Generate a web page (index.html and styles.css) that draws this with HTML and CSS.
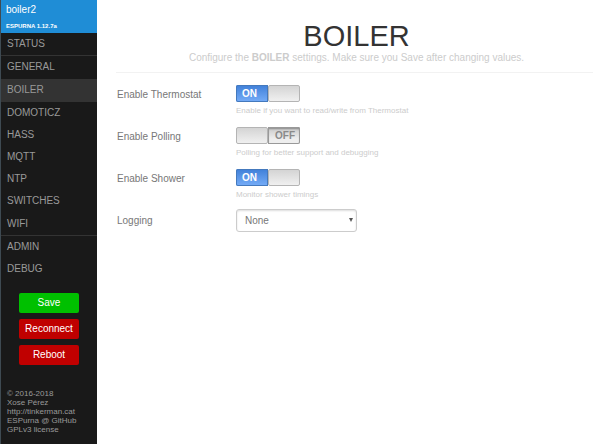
FILE: index.html
```html
<!DOCTYPE html>
<html lang="en">
<head>
<meta charset="utf-8">
<title>boiler2</title>
<link rel="stylesheet" href="styles.css">
</head>
<body>
<div class="layout">
  <aside class="sidebar">
    <header class="brand">
      <span class="hostname">boiler2</span>
      <span class="version">ESPURNA 1.12.7a</span>
    </header>
    <nav class="menu">
      <a class="divided" href="#status">STATUS</a>
      <a class="divided" href="#general">GENERAL</a>
      <a class="divided active" href="#boiler">BOILER</a>
      <a href="#domoticz">DOMOTICZ</a>
      <a href="#hass">HASS</a>
      <a href="#mqtt">MQTT</a>
      <a href="#ntp">NTP</a>
      <a class="divided" href="#switches">SWITCHES</a>
      <a class="divided group-end" href="#wifi">WIFI</a>
      <a href="#admin">ADMIN</a>
      <a href="#debug">DEBUG</a>
    </nav>
    <div class="actions">
      <button class="save" type="button">Save</button>
      <button type="button">Reconnect</button>
      <button type="button">Reboot</button>
    </div>
    <footer class="credits">
      <div>© 2016-2018</div>
      <div>Xose Pérez</div>
      <a href="#site">http://tinkerman.cat</a>
      <a href="#source">ESPurna @ GitHub</a>
      <a href="#license">GPLv3 license</a>
    </footer>
  </aside>
  <main class="content">
    <header class="page-head">
      <h1>BOILER</h1>
      <p>Configure the <b>BOILER</b> settings. Make sure you Save after changing values.</p>
    </header>
    <form class="settings">
      <div class="row">
        <label for="thermostat">Enable Thermostat</label>
        <div class="field">
          <span class="switch"><input id="thermostat" type="checkbox" checked><span class="state on">ON</span><span class="knob"></span></span>
          <span class="hint">Enable if you want to read/write from Thermostat</span>
        </div>
      </div>
      <div class="row">
        <label for="polling">Enable Polling</label>
        <div class="field">
          <span class="switch"><input id="polling" type="checkbox"><span class="knob"></span><span class="state off">OFF</span></span>
          <span class="hint">Polling for better support and debugging</span>
        </div>
      </div>
      <div class="row">
        <label for="shower">Enable Shower</label>
        <div class="field">
          <span class="switch"><input id="shower" type="checkbox" checked><span class="state on">ON</span><span class="knob"></span></span>
          <span class="hint">Monitor shower timings</span>
        </div>
      </div>
      <div class="row">
        <label for="logging">Logging</label>
        <div class="select">
          <select id="logging"><option>None</option></select>
          <svg viewBox="0 0 4 4" aria-hidden="true"><path d="M0 0h4L2 4z"/></svg>
        </div>
      </div>
    </form>
  </main>
</div>
</body>
</html>
```
FILE: styles.css
```css
* {
  box-sizing: border-box;
}

body {
  margin: 0;
  background: #fff;
  color: #777;
  font: 10px/12px "Liberation Sans", Arial, sans-serif;
}

a {
  color: inherit;
  text-decoration: none;
}

.layout {
  display: grid;
  grid-template-columns: 97px 1fr;
  min-height: 100vh;
}

.sidebar {
  background: #191919;
  border-left: 1px solid #3e4a52;
}

.brand {
  display: flex;
  flex-direction: column;
  gap: 6px;
  height: 33px;
  padding: 4px 5px 0;
  background: #1f8dd6;
  color: #fff;
}

.version {
  font-size: 6px;
  line-height: 8px;
  font-weight: bold;
}

.menu {
  display: flex;
  flex-direction: column;
}

.menu a {
  padding: 0 6px;
  line-height: 22px;
  color: #999;
}

.menu .divided {
  border-bottom: 1px solid transparent;
}

.menu .divided:first-child,
.menu .group-end {
  border-bottom-color: #333;
}

.menu .active {
  background: #333;
}

.actions {
  display: flex;
  flex-direction: column;
  gap: 6px;
  padding: 13px 18px 0;
}

.actions button {
  height: 20px;
  padding: 0;
  border: 0;
  border-radius: 2px;
  background: #c00000;
  color: #fff;
  font: inherit;
}

.actions .save {
  background: #00c000;
}

.credits {
  display: flex;
  flex-direction: column;
  padding: 24px 6px 9px;
  color: #999;
  font-size: 8px;
  line-height: 9px;
}

.page-head {
  margin-left: 19px;
  padding: 20px 0 8px 4px;
  border-bottom: 1px solid #f2f2f2;
  text-align: center;
}

.page-head h1 {
  margin: 0;
  color: #333;
  font-size: 29px;
  line-height: 32px;
  font-weight: normal;
}

.page-head p {
  margin: 0;
  color: #ccc;
}

.settings {
  display: flex;
  flex-direction: column;
  padding: 12px 20px;
}

.row {
  display: grid;
  grid-template-columns: 119px 1fr;
  min-height: 42px;
}

.row > label {
  padding-top: 4px;
}

.field {
  display: flex;
  flex-direction: column;
  align-items: flex-start;
  gap: 4px;
}

.hint {
  color: #ccc;
  font-size: 8px;
  line-height: 10px;
}

.switch {
  position: relative;
  display: grid;
  grid-template-columns: 1fr 1fr;
  width: 64px;
  height: 17px;
  border-radius: 2px;
  font-weight: bold;
  line-height: 17px;
}

.switch input {
  position: absolute;
  inset: 0;
  width: 100%;
  height: 100%;
  margin: 0;
  opacity: 0;
}

.on {
  padding-left: 6px;
  border-radius: 2px 0 0 2px;
  background: linear-gradient(#3f7fd8, #76adf8);
  box-shadow: inset 0 0 0 1px #4479bd;
  color: #fff;
}

.off {
  padding-right: 5px;
  border-radius: 0 2px 2px 0;
  background: linear-gradient(#c8c8c8, #eee 70%);
  box-shadow: inset 0 0 0 1px #999, inset 0 2px 2px #888;
  color: #8a8a8a;
  text-align: right;
}

.knob {
  border: 1px solid #b4b4b4;
  border-radius: 2px;
  background: linear-gradient(#d4d4d4, #f0f0f0);
}

.select {
  position: relative;
  width: 121px;
  height: 23px;
  margin-top: -2px;
}

.select select {
  width: 100%;
  height: 100%;
  padding: 0 8px;
  appearance: none;
  border: 1px solid #ccc;
  border-radius: 3px;
  background: #fff;
  box-shadow: inset 0 1px 2px #ddd;
  color: #777;
  font: inherit;
}

.select svg {
  position: absolute;
  top: 9px;
  right: 4px;
  width: 4px;
  height: 4px;
  fill: #555;
  pointer-events: none;
}
```
